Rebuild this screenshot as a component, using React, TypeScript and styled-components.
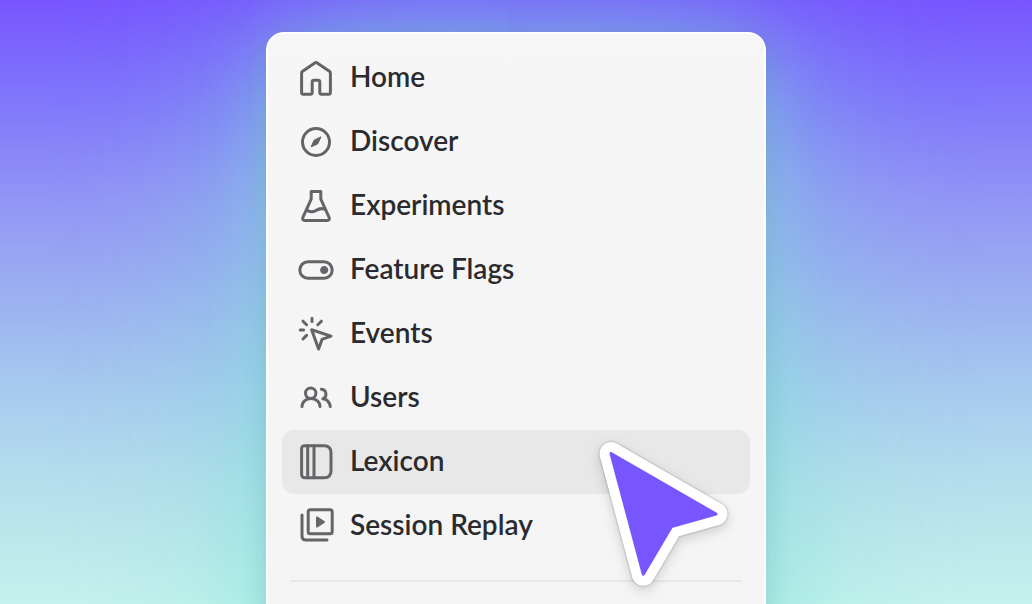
import React from "react";
import styled, { createGlobalStyle } from "styled-components";

const GlobalStyle = createGlobalStyle`
  *, *::before, *::after { box-sizing: border-box; }
  body { margin: 0; }
`;

const Page = styled.main`
  display: flex;
  justify-content: center;
  align-items: flex-start;
  height: 100vh;
  padding: 32px 16px 0;
  overflow: hidden;
  font-family: Lato, "Liberation Sans", sans-serif;
  background: linear-gradient(
    180deg,
    #7856ff 0%,
    #8077fb 17%,
    #9092f6 31%,
    #9eb5f0 52%,
    #a8ccee 66%,
    #b3dcec 78%,
    #c4f2ec 100%
  );
`;

const Panel = styled.nav`
  width: 100%;
  max-width: 500px;
  min-height: 120vh;
  padding: 12px 14px;
  border: 2px solid #ffffff;
  border-radius: 18px;
  background: linear-gradient(180deg, #f6f6f6, #f4f4f4);
  box-shadow:
    0 4px 24px rgba(40, 90, 110, 0.14),
    0 8px 64px rgba(128, 225, 217, 0.4),
    0 16px 180px rgba(128, 225, 217, 0.75);
`;

const Menu = styled.ul`
  margin: 0;
  padding: 0;
  list-style: none;
`;

const MenuItem = styled.li`
  position: relative;
`;

const MenuLink = styled.a<{ $active?: boolean }>`
  display: flex;
  align-items: center;
  gap: 16px;
  height: 64px;
  padding: 0 16px;
  border-radius: 12px;
  background: ${(p) => (p.$active ? "#e8e8e8" : "transparent")};
  color: #2b2b2f;
  text-decoration: none;
`;

const Label = styled.span`
  font-size: 28px;
  font-weight: 600;
  line-height: 32px;
  padding-bottom: 4px;
`;

const Icon = styled.svg`
  flex: none;
  width: 36px;
  height: 36px;
  fill: none;
  stroke: #646469;
  stroke-width: 3;
  stroke-linecap: round;
  stroke-linejoin: round;

  .solid {
    fill: #646469;
    stroke-width: 1;
  }
`;

const Divider = styled.hr`
  height: 2px;
  margin: 22px 8px;
  border: 0;
  background: #e8e8e8;
`;

const Pointer = styled.svg`
  position: absolute;
  top: 6px;
  right: 14px;
  z-index: 1;
  width: 144px;
  height: 160px;
  overflow: visible;
  pointer-events: none;
  stroke-linejoin: round;
  filter: drop-shadow(0 0 1px rgba(0, 0, 0, 0.35)) drop-shadow(0 4px 6px rgba(0, 0, 0, 0.16));
`;

const icons: Record<string, React.ReactNode> = {
  home: (
    <path d="M3.6 13.2Q3.6 12 4.6 11.3L16.8 3Q18 2.2 19.2 3L31.4 11.3Q32.4 12 32.4 13.2V32.4Q32.4 34.2 30.6 34.2H23.4Q21.8 34.2 21.8 32.6V22Q21.8 20.3 20.1 20.3H15.9Q14.2 20.3 14.2 22V32.6Q14.2 34.2 12.6 34.2H5.4Q3.6 34.2 3.6 32.4Z" />
  ),
  discover: (
    <>
      <circle cx="18" cy="18" r="13.5" />
      <path className="solid" d="M22.8 13.2L20 19.3Q19.7 20 19 20.3L13.2 22.8L15.8 16.8Q16.1 16 16.8 15.7Z" />
    </>
  ),
  experiments: (
    <>
      <path d="M13.2 3.5H22.8V11.2L31.1 29.4Q32 32.5 29.2 32.5H6.8Q4 32.5 4.9 29.4L13.2 11.2Z" />
      <path d="M9.2 22.2C12.5 24.6 15.2 24.2 18 22.4C21 20.4 23.8 20.2 26.6 21.2" />
    </>
  ),
  flags: (
    <>
      <rect x="1.8" y="9.7" width="32.4" height="16.6" rx="8.3" />
      <circle className="solid" cx="26.2" cy="18" r="3.6" />
    </>
  ),
  events: (
    <>
      <path d="M14 2.2V5.6M2.2 14H5.6M5 5.2L8.6 8.8M23.4 5.2L19.8 8.8M5 23L8.6 19.4" />
      <path d="M13.6 13.8L33 20.1L24 23.4L20.6 33Z" />
    </>
  ),
  users: (
    <>
      <circle cx="12.7" cy="13.2" r="5.2" />
      <path d="M4 26.6C4 22 7.7 18.6 12.9 18.6S22 22 22 26.6" />
      <path d="M23.4 9.2C29 9.8 29.4 17 24.8 18.8C28.6 19.2 31.6 22 32.3 26.6" />
    </>
  ),
  lexicon: (
    <>
      <path d="M7 1.7H26Q33 1.7 33 8.7V26.7Q33 33.7 26 33.7H7Q3.6 33.7 3.6 30.3V5.1Q3.6 1.7 7 1.7Z" />
      <path d="M9.7 1.7V33.7M16 1.7V33.7" />
    </>
  ),
  replay: (
    <>
      <rect x="10.2" y="1.7" width="24" height="24" rx="2" />
      <path d="M4 7V28Q4 32 8 32H29" />
      <path className="solid" d="M18.5 9.2Q18.5 8.6 19.2 8.9L26.3 13.5Q27 14 26.3 14.5L19.2 19.1Q18.5 19.4 18.5 18.8Z" />
    </>
  ),
};

const items = [
  { icon: "home", label: "Home" },
  { icon: "discover", label: "Discover" },
  { icon: "experiments", label: "Experiments" },
  { icon: "flags", label: "Feature Flags" },
  { icon: "events", label: "Events" },
  { icon: "users", label: "Users" },
  { icon: "lexicon", label: "Lexicon", active: true },
  { icon: "replay", label: "Session Replay" },
];

const pointerShape = "M19 17.5L124 78L79.5 90.5L51.3 138.3Z";

export default function App() {
  return (
    <>
      <GlobalStyle />
      <Page>
        <Panel>
          <Menu>
            {items.map((item) => (
              <MenuItem key={item.icon}>
                <MenuLink href={`#${item.icon}`} $active={item.active}>
                  <Icon viewBox="0 0 36 36" aria-hidden="true">
                    {icons[item.icon]}
                  </Icon>
                  <Label>{item.label}</Label>
                </MenuLink>
                {item.active && (
                  <Pointer viewBox="0 0 144 160" aria-hidden="true">
                    <path d={pointerShape} fill="#ffffff" stroke="#ffffff" strokeWidth="23" />
                    <path d={pointerShape} fill="#7856ff" stroke="#7856ff" strokeWidth="3" />
                  </Pointer>
                )}
              </MenuItem>
            ))}
          </Menu>
          <Divider />
        </Panel>
      </Page>
    </>
  );
}
